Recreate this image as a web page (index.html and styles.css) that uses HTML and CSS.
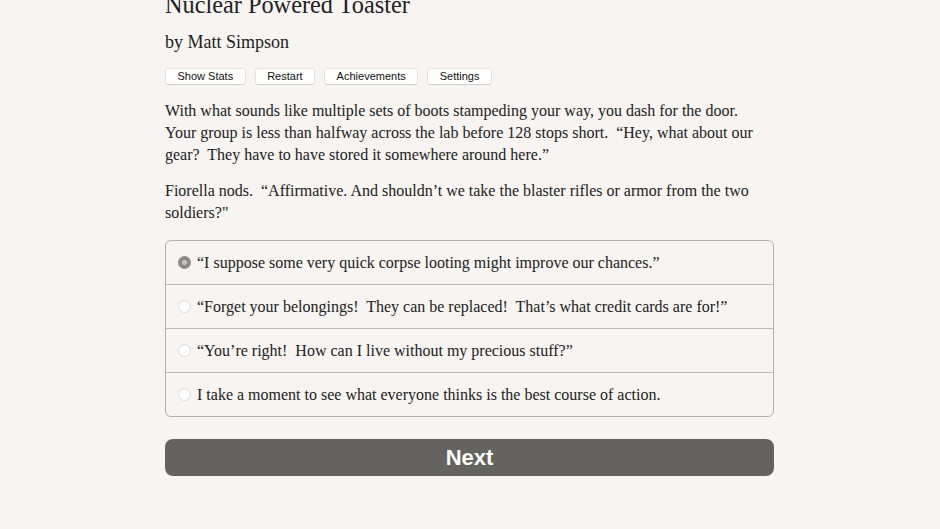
FILE: index.html
```html
<!DOCTYPE html>
<html>
<head>
<meta charset="utf-8">
<link rel="stylesheet" href="styles.css">
</head>
<body>
<div class="page">
  <h1 class="title">Nuclear Powered Toaster</h1>
  <h2 class="author">by Matt Simpson</h2>
  <div class="toolbar">
    <button class="tbtn">Show Stats</button>
    <button class="tbtn">Restart</button>
    <button class="tbtn">Achievements</button>
    <button class="tbtn">Settings</button>
  </div>
  <p class="para">With what sounds like multiple sets of boots stampeding your way, you dash for the door.  Your group is less than halfway across the lab before 128 stops short.  “Hey, what about our gear?  They have to have stored it somewhere around here.”</p>
  <p class="para">Fiorella nods.  “Affirmative. And shouldn’t we take the blaster rifles or armor from the two soldiers?"</p>
  <div class="choices">
    <label class="choice"><span class="radio checked"></span><span>“I suppose some very quick corpse looting might improve our chances.”</span></label>
    <label class="choice"><span class="radio"></span><span>“Forget your belongings!  They can be replaced!  That’s what credit cards are for!”</span></label>
    <label class="choice"><span class="radio"></span><span>“You’re right!  How can I live without my precious stuff?”</span></label>
    <label class="choice"><span class="radio"></span><span>I take a moment to see what everyone thinks is the best course of action.</span></label>
  </div>
  <button class="next">Next</button>
</div>
</body>
</html>
```

FILE: styles.css
```css
html, body {
  margin: 0;
  padding: 0;
  background: #f7f4f1;
}
body {
  font-family: "Liberation Serif", "Times New Roman", serif;
  color: #222;
}
.page {
  width: 609px;
  margin: -10px 0 0 165px;
}
.title {
  font-size: 24.3px;
  font-weight: normal;
  line-height: 30px;
  margin: 0;
}
.author {
  font-size: 18px;
  font-weight: normal;
  line-height: 24px;
  margin: 10px 0 0 0;
}
.toolbar {
  display: flex;
  gap: 11px;
  margin-top: 15px;
  padding-left: 1px;
}
.tbtn {
  font-family: "Liberation Sans", Arial, sans-serif;
  font-size: 11px;
  color: #111;
  background: #fff;
  border: none;
  border-radius: 2px;
  box-shadow: 0 0 0 0.5px #d8d4d0, 0 1px 1px #cfcac5;
  height: 15px;
  padding: 0 11.5px;
  line-height: 15px;
}
.para {
  font-size: 16px;
  line-height: 22px;
  margin: 16px 0 0 0;
  white-space: pre-wrap;
}
.para + .para {
  margin-top: 14px;
}
.choices {
  margin-top: 16px;
  border: 1px solid #b3b0ad;
  border-radius: 6px;
  overflow: hidden;
}
.choice {
  display: flex;
  align-items: center;
  height: 43px;
  padding-left: 12px;
  font-size: 16px;
  white-space: pre-wrap;
  border-top: 1px solid #bdbab7;
}
.choice:first-child {
  border-top: none;
}
.radio {
  width: 13px;
  height: 13px;
  border-radius: 50%;
  background: #fff;
  box-shadow: inset 0 0 0 1px #dcd9d6;
  margin-right: 6px;
  flex: none;
}
.radio.checked {
  background: radial-gradient(circle, #c8c6c4 0 2px, #8d8b89 2.8px);
  box-shadow: none;
}
.next {
  display: block;
  width: 100%;
  height: 37px;
  margin-top: 22px;
  background: #656360;
  color: #fff;
  border: none;
  border-radius: 8px;
  font-family: "Liberation Sans", Arial, sans-serif;
  font-weight: bold;
  font-size: 22px;
}
```
